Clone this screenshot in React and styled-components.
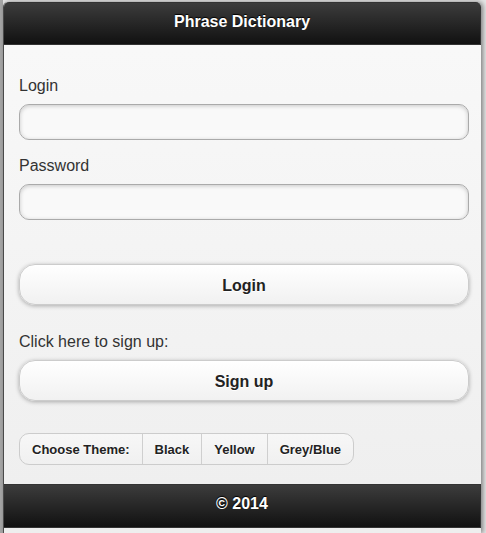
import React from 'react'
import styled, { createGlobalStyle } from 'styled-components'

const GlobalStyle = createGlobalStyle`
  html, body {
    margin: 0;
    padding: 0;
    background: #e6e6e6;
    font-family: "Liberation Sans", Arial, sans-serif;
  }
  * { box-sizing: border-box; }
`

const Frame = styled.div`
  height: 533px;
  overflow: hidden;
  padding: 2px 0 0 3px;
  background: linear-gradient(to right, #a6a6a6 0, #a6a6a6 3px, #e6e6e6 3px);
`

const Page = styled.div`
  width: 478px;
  min-height: 531px;
  display: flex;
  flex-direction: column;
  background: linear-gradient(#f9f9f9, #eeeeee);
  border-left: 1px solid #4a4a4a;
  border-radius: 5px 5px 0 0;
  box-shadow: 2px 0 5px rgba(0, 0, 0, 0.45);
`

const Bar = styled.div`
  height: ${p => p.h}px;
  padding-bottom: ${p => p.pb}px;
  display: flex;
  align-items: center;
  justify-content: center;
  background: linear-gradient(#3c3c3c, #111111);
  border: 1px solid #333;
  border-left: none;
  border-radius: ${p => (p.top ? '5px 5px 0 0' : '0')};
  color: #fff;
  font-size: 16px;
  font-weight: bold;
  text-shadow: 0 -1px 1px #000;
`

const Content = styled.div`
  padding: 31px 12px 19px 15px;
  display: flex;
  flex-direction: column;
`

const Label = styled.label`
  display: block;
  font-size: 16px;
  line-height: 20px;
  color: #333;
  margin-top: ${p => p.mt || 0}px;
`

const Input = styled.input`
  display: block;
  width: 100%;
  height: 36px;
  margin-top: 8px;
  border: 1px solid #aaa;
  border-radius: 10px;
  background: #f9f9f9;
  box-shadow: inset 0 1px 4px rgba(0, 0, 0, 0.2);
  font-size: 16px;
  padding: 0 8px;
  outline: none;
`

const Button = styled.button`
  display: block;
  width: 100%;
  height: 41px;
  padding: 2px 0 0;
  margin-top: ${p => p.mt || 0}px;
  border: 1px solid #cccccc;
  border-radius: 16px;
  background: linear-gradient(#ffffff, #f1f1f1);
  box-shadow: 0 1px 4px rgba(0, 0, 0, 0.3);
  font-family: inherit;
  font-size: 16px;
  font-weight: bold;
  color: #222;
  text-shadow: 0 1px 0 #fff;
  cursor: pointer;
`

const Group = styled.div`
  display: inline-flex;
  align-self: flex-start;
  height: 32px;
  margin-top: 32px;
  border: 1px solid #cccccc;
  border-radius: 10px;
  overflow: hidden;
  background: linear-gradient(#f7f7f7, #f0f0f0);
`

const GroupItem = styled.div`
  display: flex;
  align-items: center;
  padding: 1px 12px 0;
  font-size: 13px;
  font-weight: bold;
  color: #222;
  text-shadow: 0 1px 0 #fff;
  & + & {
    border-left: 1px solid #cfcfcf;
  }
`

const Filler = styled.div`
  flex: 1;
`

export default function App() {
  return (
    <>
      <GlobalStyle />
      <Frame>
        <Page>
          <Bar h={43} pb={3} top>Phrase Dictionary</Bar>
          <Content>
            <Label>Login</Label>
            <Input type="text" />
            <Label mt={16}>Password</Label>
            <Input type="password" />
            <Button mt={44}>Login</Button>
            <Label mt={27}>Click here to sign up:</Label>
            <Button mt={8}>Sign up</Button>
            <Group>
              <GroupItem>Choose Theme:</GroupItem>
              <GroupItem>Black</GroupItem>
              <GroupItem>Yellow</GroupItem>
              <GroupItem>Grey/Blue</GroupItem>
            </Group>
          </Content>
          <Bar h={44} pb={4}>© 2014</Bar>
          <Filler />
        </Page>
      </Frame>
    </>
  )
}
